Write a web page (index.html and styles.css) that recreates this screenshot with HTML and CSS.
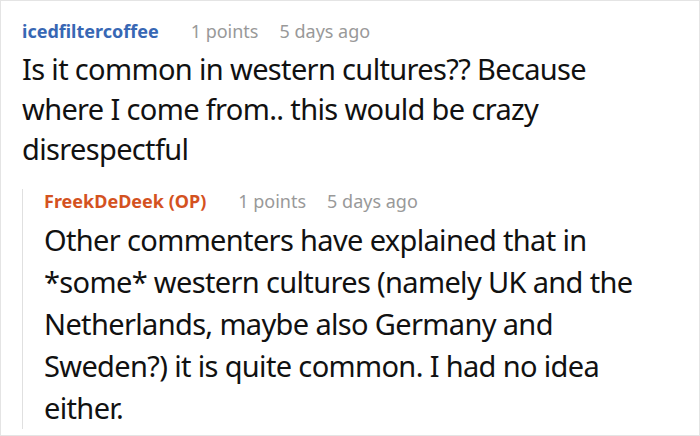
FILE: index.html
```html
<!DOCTYPE html>
<html>
<head>
<meta charset="utf-8">
<link rel="stylesheet" href="styles.css">
</head>
<body>
<div class="frame">
  <div class="comment">
    <div class="meta">
      <span class="author">icedfiltercoffee</span>
      <span class="info">1 points</span>
      <span class="info">5 days ago</span>
    </div>
    <p class="text">Is it common in western cultures?? Because where I come from.. this would be crazy disrespectful</p>
    <div class="reply">
      <div class="meta">
        <span class="author op">FreekDeDeek (OP)</span>
        <span class="info">1 points</span>
        <span class="info">5 days ago</span>
      </div>
      <p class="text reply-text">Other commenters have explained that in *some* western cultures (namely UK and the Netherlands, maybe also Germany and Sweden?) it is quite common. I had no idea either.</p>
    </div>
  </div>
</div>
</body>
</html>
```
FILE: styles.css
```css
html, body {
  margin: 0;
  padding: 0;
  background: #fff;
}
.frame {
  width: 700px;
  height: 436px;
  box-sizing: border-box;
  border: 1px solid #e4e4e4;
  overflow: hidden;
  font-family: "Noto Sans", "Open Sans", sans-serif;
}
.comment {
  padding: 18px 50px 0 21px;
}
.meta {
  display: flex;
  gap: 21px;
  font-size: 18px;
  line-height: 24px;
}
.author {
  font-weight: bold;
  color: #3767b4;
  margin-right: 11px;
}
.author.op {
  color: #d4521f;
}
.info {
  color: #999;
}
.text {
  margin: 6px 0 0 0;
  font-size: 29px;
  letter-spacing: -0.65px;
  line-height: 40px;
  color: #111;
}
.reply {
  margin-top: 20px;
  border-left: 1px solid #e0e0e0;
  padding-left: 21px;
}
.reply-text {
  line-height: 42px;
}
```
